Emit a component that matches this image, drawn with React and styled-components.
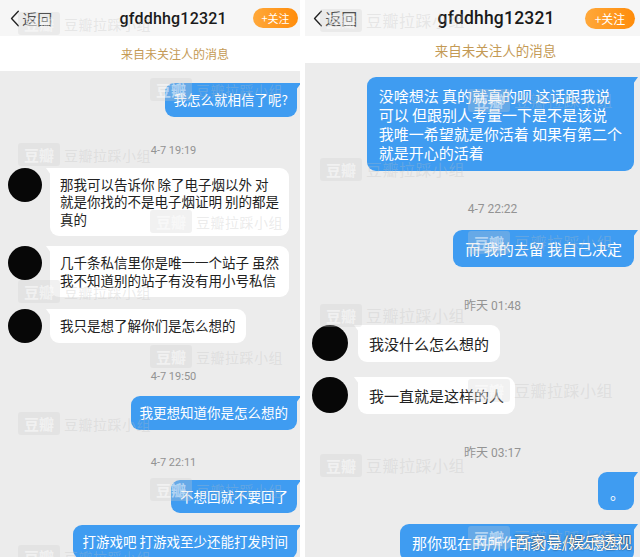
import React from 'react';
import styled, { createGlobalStyle, ThemeProvider } from 'styled-components';

const GlobalStyle = createGlobalStyle`
  html, body {
    margin: 0;
    padding: 0;
    background: #fff;
  }
  body {
    font-family: "Noto Sans CJK SC", "Noto Sans", sans-serif;
  }
`;

// two screenshots, the right one is shot a little larger
const small = {
  width: 300, fs: 13.5, lh: 17.5, pad: '8px 9px', inPad: '8px 10px', av: 34, avLeft: 8, avGap: 8,
  ts: 11, tsShift: 50, title: 16, titleShift: 41, back: 15, btnW: 45, btnH: 20, btnFs: 11,
  bannerH: 35, bannerFs: 12, edge: 3, wmLabel: 14, padL: 10,
};
const large = {
  width: 335, fs: 15, lh: 19, pad: '9px 12px', inPad: '9px 11px', av: 36, avLeft: 7, avGap: 10,
  ts: 12, tsShift: 46, title: 17.5, titleShift: 50, back: 16, btnW: 50, btnH: 21, btnFs: 12,
  bannerH: 27, bannerFs: 13.5, edge: 6, wmLabel: 16, padL: 8,
};

const Page = styled.div`
  position: relative;
  display: flex;
  gap: 5px;
  width: 640px;
  height: 557px;
  overflow: hidden;
`;

const Phone = styled.div`
  position: relative;
  width: ${p => p.theme.width}px;
  height: 557px;
  flex-shrink: 0;
  background: #ececec;
  overflow: hidden;
`;

const Header = styled.div`
  display: flex;
  align-items: center;
  height: 36px;
  padding: 0 ${p => p.theme.edge - 1}px 0 ${p => p.theme.padL}px;
  background: #f6f6f6;
`;

const Back = styled.div`
  display: flex;
  align-items: center;
  gap: 3px;
  font-size: ${p => p.theme.back}px;
  color: #222;
  svg { display: block; }
`;

const Title = styled.div`
  flex: 1;
  text-align: center;
  padding-left: ${p => p.theme.titleShift}px;
  font-family: "Roboto", "Noto Sans", sans-serif;
  font-weight: 500;
  font-size: ${p => p.theme.title}px;
  color: #1a1a1a;
  letter-spacing: 0.2px;
`;

const Follow = styled.div`
  display: flex;
  align-items: center;
  justify-content: center;
  width: ${p => p.theme.btnW}px;
  height: ${p => p.theme.btnH}px;
  border-radius: 11px;
  background: linear-gradient(90deg, #ffa83a, #ff8c0a);
  color: #fff;
  font-size: ${p => p.theme.btnFs}px;
`;

const Banner = styled.div`
  height: ${p => p.theme.bannerH}px;
  display: flex;
  align-items: center;
  justify-content: center;
  padding-left: ${p => p.theme.tsShift}px;
  background: #fff;
  color: #c49a55;
  font-size: ${p => p.theme.bannerFs}px;
`;

const Chat = styled.div`
  display: flex;
  flex-direction: column;
  padding-right: ${p => p.theme.edge}px;
`;

const Row = styled.div`
  display: flex;
  align-items: flex-start;
  justify-content: ${p => (p.$out ? 'flex-end' : 'flex-start')};
  margin-top: ${p => p.$mt}px;
  padding-left: ${p => (p.$out ? 0 : p.theme.avLeft)}px;
  gap: ${p => p.theme.avGap}px;
`;

const Avatar = styled.div`
  width: ${p => p.theme.av}px;
  height: ${p => p.theme.av}px;
  border-radius: 50%;
  background: #070707;
  flex-shrink: 0;
`;

const Bubble = styled.div`
  position: relative;
  padding: ${p => (p.$out ? p.theme.pad : p.theme.inPad)};
  font-size: ${p => p.theme.fs}px;
  line-height: ${p => p.theme.lh}px;
  color: ${p => (p.$out ? '#fff' : '#222')};
  background: ${p => (p.$out ? '#3f9cf1' : '#fff')};
  border-radius: 9px;
  border-top-${p => (p.$out ? 'right' : 'left')}-radius: 1px;
  white-space: nowrap;

  &::after {
    content: '';
    position: absolute;
    top: 0;
    ${p => (p.$out ? 'right: -4px;' : 'left: -4px;')}
    border-top: 7px solid ${p => (p.$out ? '#3f9cf1' : '#fff')};
    ${p => (p.$out ? 'border-right' : 'border-left')}: 5px solid transparent;
  }

  span { display: block; }
`;

const Dot = styled(Bubble)`
  width: 12px;
  text-align: center;
  padding-top: 11px;
  padding-bottom: 8px;
`;

const Time = styled.div`
  margin-top: ${p => p.$mt}px;
  padding-left: ${p => p.theme.tsShift}px;
  text-align: center;
  font-family: "Roboto", "Noto Sans CJK SC", sans-serif;
  font-size: ${p => p.theme.ts}px;
  line-height: 14px;
  color: #939393;
`;

const Mark = styled.div`
  position: absolute;
  left: ${p => p.$x}px;
  top: ${p => p.$y}px;
  display: flex;
  align-items: center;
  gap: 4px;
  pointer-events: none;
  z-index: 2;
`;

const MarkBox = styled.div`
  width: 42px;
  height: 23px;
  border-radius: 3px;
  background: rgba(205, 205, 205, 0.28);
  color: rgba(255, 255, 255, 0.5);
  font-size: 15px;
  font-weight: 700;
  line-height: 23px;
  text-align: center;
`;

const MarkText = styled.div`
  font-size: ${p => p.theme.wmLabel}px;
  color: rgba(190, 190, 190, 0.3);
  letter-spacing: 0.5px;
`;

const Stamp = styled.div`
  position: absolute;
  right: 8px;
  bottom: 4px;
  z-index: 3;
  color: #fff;
  font-size: 16px;
  text-shadow: 0 0 2px rgba(0, 0, 0, 0.55), 0 0 1px rgba(0, 0, 0, 0.6);
`;

const Chevron = ({ h }) => (
  <svg width={h * 0.55} height={h} viewBox="0 0 9 16" fill="none">
    <path d="M8 1 L1.5 8 L8 15" stroke="#222" strokeWidth="1.3" strokeLinecap="round" strokeLinejoin="round" />
  </svg>
);

const leftMsgs = [
  { t: 'out', mt: 12, lines: ['我怎么就相信了呢?'] },
  { t: 'time', mt: 27, text: '4-7 19:19' },
  { t: 'in', mt: 10, lines: ['那我可以告诉你 除了电子烟以外  对', '就是你找的不是电子烟证明 别的都是', '真的'] },
  { t: 'in', mt: 10, lines: ['几千条私信里你是唯一一个站子 虽然', '我不知道别的站子有没有用小号私信'] },
  { t: 'in', mt: 12, lines: ['我只是想了解你们是怎么想的'] },
  { t: 'time', mt: 27, text: '4-7 19:50' },
  { t: 'out', mt: 12, lines: ['我更想知道你是怎么想的'] },
  { t: 'time', mt: 26, text: '4-7 22:11' },
  { t: 'out', mt: 10, lines: ['不想回就不要回了'] },
  { t: 'out', mt: 12, lines: ['打游戏吧 打游戏至少还能打发时间'] },
];

const rightMsgs = [
  { t: 'out', mt: 14, lines: ['没啥想法 真的就真的呗 这话跟我说', '可以 但跟别人考量一下是不是该说', '我唯一希望就是你活着 如果有第二个', '就是开心的活着'] },
  { t: 'time', mt: 31, text: '4-7 22:22' },
  { t: 'out', mt: 14, lines: ['而 我的去留 我自己决定'] },
  { t: 'time', mt: 32, text: '昨天 01:48' },
  { t: 'in', mt: 12, lines: ['我没什么怎么想的'] },
  { t: 'in', mt: 15, lines: ['我一直就是这样的人'] },
  { t: 'time', mt: 32, text: '昨天 03:17' },
  { t: 'dot', mt: 12 },
  { t: 'out', mt: 14, lines: ['那你现在的所作所为是什么意思'] },
];

const leftMarks = [[18, 12], [150, 78], [18, 143], [150, 210], [18, 280], [150, 345], [18, 412], [150, 478], [18, 545]];
const rightMarks = [[15, 8], [163, 88], [15, 157], [163, 230], [15, 303], [163, 378], [15, 453], [163, 525]];

function Message({ m }) {
  if (m.t === 'time') return <Time $mt={m.mt}>{m.text}</Time>;
  if (m.t === 'dot') {
    return (
      <Row $out $mt={m.mt}>
        <Dot $out>。</Dot>
      </Row>
    );
  }
  const out = m.t === 'out';
  return (
    <Row $out={out} $mt={m.mt}>
      {!out && <Avatar />}
      <Bubble $out={out}>
        {m.lines.map(l => <span key={l}>{l}</span>)}
      </Bubble>
    </Row>
  );
}

function Screen({ theme, msgs, marks }) {
  return (
    <ThemeProvider theme={theme}>
      <Phone>
        <Header>
          <Back>
            <Chevron h={17} />
            返回
          </Back>
          <Title>gfddhhg12321</Title>
          <Follow>+关注</Follow>
        </Header>
        <Banner>来自未关注人的消息</Banner>
        <Chat>
          {msgs.map((m, i) => <Message key={i} m={m} />)}
        </Chat>
        {marks.map(([x, y]) => (
          <Mark key={`${x}-${y}`} $x={x} $y={y}>
            <MarkBox>豆瓣</MarkBox>
            <MarkText>豆瓣拉踩小组</MarkText>
          </Mark>
        ))}
      </Phone>
    </ThemeProvider>
  );
}

export default function App() {
  return (
    <>
      <GlobalStyle />
      <Page>
        <Screen theme={small} msgs={leftMsgs} marks={leftMarks} />
        <Screen theme={large} msgs={rightMsgs} marks={rightMarks} />
        <Stamp>百家号/娱乐透视</Stamp>
      </Page>
    </>
  );
}
